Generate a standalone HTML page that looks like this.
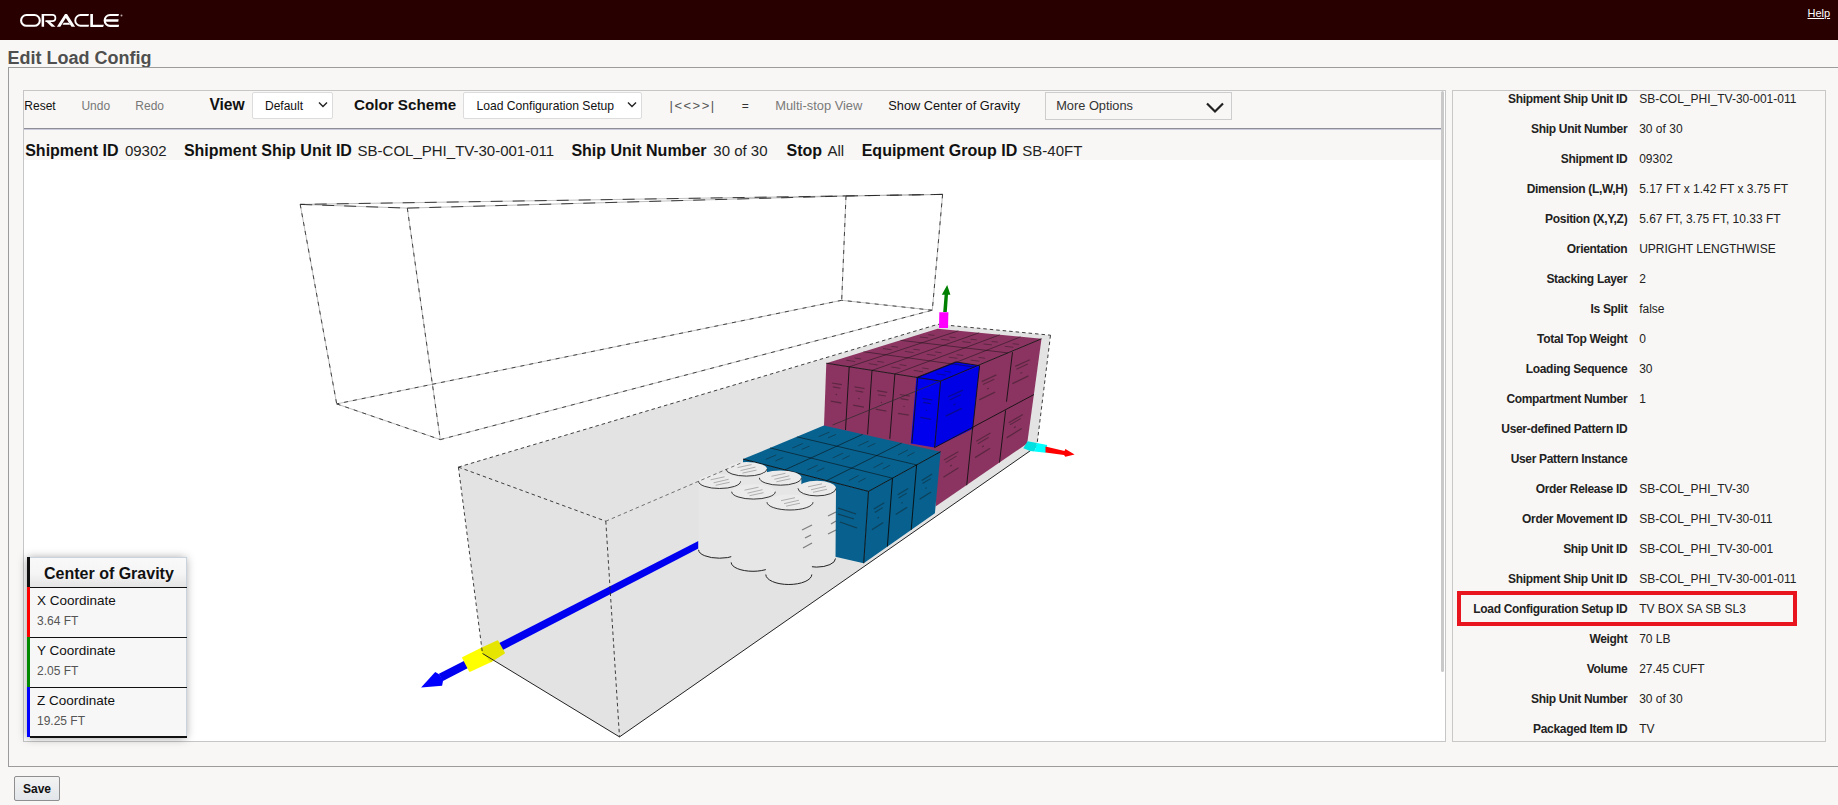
<!DOCTYPE html>
<html><head><meta charset="utf-8"><title>Edit Load Config</title>
<style>
html,body{margin:0;padding:0;}
body{width:1838px;height:805px;overflow:hidden;position:relative;background:#f8f7f5;font-family:"Liberation Sans",sans-serif;}
.t{position:absolute;white-space:pre;}
</style></head><body>
<div style="position:absolute;left:0;top:0;width:1838px;height:40px;background:#280000"></div>
<svg style="position:absolute;left:0;top:0" width="140" height="40" viewBox="0 0 140 40">
<rect x="21.1" y="15.05" width="18.7" height="10.75" rx="5.37" fill="none" stroke="#fff" stroke-width="2.1"/>
<g fill="#fff">
<path d="M41.6,14.1 H52.35 A3.95,3.95 0 0 1 52.35,22 H45.4 V20.3 H52.35 A2.25,2.25 0 0 0 52.35,15.8 H44.1 V26.7 H41.6 Z"/>
<path d="M45.6,21 H49.3 L55.5,26.7 H51.6 Z"/>
<path d="M56.9,26.7 L65,14.1 H67 L75.1,26.7 H71.5 L65.8,18 L60.3,26.7 Z"/>
<path d="M63.7,22.8 H68.8 L70.1,24.8 H62.5 Z"/>
<path d="M89,14.1 H80.6 A6.3,6.3 0 0 0 80.6,26.7 H88.6 L89,24.8 H80.6 A4.4,4.4 0 0 1 80.6,16 H88.4 Z"/>
<path d="M90.3,14 H92.95 V24.7 H103.9 L103.1,26.9 H90.3 Z"/>
<path d="M119,14 H110.05 A6.45,6.45 0 0 0 110.05,26.9 H118.6 L119.1,24.7 H110.05 A4.3,4.3 0 0 1 105.9,21.7 H118.3 L118.6,19.2 H105.9 A4.3,4.3 0 0 1 110.05,16.1 H118.4 Z"/>
</g><circle cx="121.5" cy="15.6" r="1" fill="#b9a9a9"/></svg>
<div class="t" style="left:1807.5px;top:8.3px;font-size:11px;line-height:11px;color:#fff;text-decoration:underline;">Help</div>
<div class="t" style="left:7.5px;top:48.6px;font-size:18px;line-height:18px;font-weight:700;color:#4f4f4f;">Edit Load Config</div>
<div style="position:absolute;left:8px;top:67px;width:1840px;height:698px;border:1px solid #9c9c9c"></div>
<div style="position:absolute;left:23px;top:90px;width:1421px;height:650px;border:1px solid #c6c6c6;background:#fff"></div>
<div style="position:absolute;left:24px;top:91px;width:1417px;height:37px;background:#f8f7f5"></div>
<div style="position:absolute;left:24px;top:128px;width:1420px;height:1px;background:#8e8e96"></div>
<div style="position:absolute;left:24px;top:129px;width:1420px;height:1px;background:#c9cbdc"></div>
<div style="position:absolute;left:24px;top:130px;width:1417px;height:30px;background:#f8f7f5"></div>
<div style="position:absolute;left:1441px;top:91px;width:3px;height:581px;background:#c9c9c9;border-radius:1.5px"></div>
<div class="t" style="left:24.3px;top:99.6px;font-size:12px;line-height:12px;color:#111;">Reset</div>
<div class="t" style="left:81.4px;top:99.6px;font-size:12px;line-height:12px;color:#777;">Undo</div>
<div class="t" style="left:135.3px;top:99.6px;font-size:12px;line-height:12px;color:#777;">Redo</div>
<div class="t" style="left:209.4px;top:96.9px;font-size:15.6px;line-height:15.6px;font-weight:700;color:#111;">View</div>
<div style="position:absolute;left:252px;top:92px;width:79px;height:25px;border:1px solid #dcdcdc;border-radius:2px;background:#fff"></div>
<div class="t" style="left:265.0px;top:99.6px;font-size:12px;line-height:12px;color:#111;">Default</div>
<svg style="position:absolute;left:318px;top:101px" width="10" height="8"><path d="M1 1.5 L5 5.5 L9 1.5" fill="none" stroke="#222" stroke-width="1.4"/></svg>
<div class="t" style="left:354.0px;top:97.2px;font-size:15.2px;line-height:15.2px;font-weight:700;color:#111;">Color Scheme</div>
<div style="position:absolute;left:463px;top:92px;width:177px;height:25px;border:1px solid #dcdcdc;border-radius:2px;background:#fff"></div>
<div class="t" style="left:476.4px;top:99.5px;font-size:12.15px;line-height:12.15px;color:#111;">Load Configuration Setup</div>
<svg style="position:absolute;left:627px;top:101px" width="10" height="8"><path d="M1 1.5 L5 5.5 L9 1.5" fill="none" stroke="#222" stroke-width="1.4"/></svg>
<div class="t" style="left:669.5px;top:98.8px;font-size:13px;line-height:13px;color:#555;letter-spacing:1.5px;">|&lt;&lt;&gt;&gt;|</div>
<div class="t" style="left:741.7px;top:99.6px;font-size:12px;line-height:12px;color:#333;">=</div>
<div class="t" style="left:775.2px;top:99.8px;font-size:12.9px;line-height:12.9px;color:#7a7a7a;">Multi-stop View</div>
<div class="t" style="left:888.3px;top:99.9px;font-size:12.75px;line-height:12.75px;color:#111;">Show Center of Gravity</div>
<div style="position:absolute;left:1045px;top:92px;width:185px;height:26px;border:1px solid #cdcdcd;background:#f8f7f5"></div>
<div class="t" style="left:1056.2px;top:99.7px;font-size:12.8px;line-height:12.8px;color:#333;">More Options</div>
<svg style="position:absolute;left:1205px;top:101px" width="20" height="14"><path d="M2 2.5 L10 10.5 L18 2.5" fill="none" stroke="#222" stroke-width="2.2"/></svg>
<div class="t" style="left:25.2px;top:143.4px;font-size:16px;line-height:16px;font-weight:700;color:#111;">Shipment ID</div>
<div class="t" style="left:124.9px;top:143.0px;font-size:15px;line-height:15px;color:#222;">09302</div>
<div class="t" style="left:183.9px;top:143.4px;font-size:16px;line-height:16px;font-weight:700;color:#111;">Shipment Ship Unit ID</div>
<div class="t" style="left:357.6px;top:143.0px;font-size:15px;line-height:15px;color:#222;">SB-COL_PHI_TV-30-001-011</div>
<div class="t" style="left:571.4px;top:143.4px;font-size:16px;line-height:16px;font-weight:700;color:#111;">Ship Unit Number</div>
<div class="t" style="left:713.3px;top:143.0px;font-size:15px;line-height:15px;color:#222;">30 of 30</div>
<div class="t" style="left:786.6px;top:143.4px;font-size:16px;line-height:16px;font-weight:700;color:#111;">Stop</div>
<div class="t" style="left:827.4px;top:143.0px;font-size:15px;line-height:15px;color:#222;">All</div>
<div class="t" style="left:861.7px;top:143.4px;font-size:16px;line-height:16px;font-weight:700;color:#111;">Equipment Group ID</div>
<div class="t" style="left:1022.3px;top:143.0px;font-size:15px;line-height:15px;color:#222;">SB-40FT</div>
<svg style="position:absolute;left:0;top:0" width="1838" height="805" viewBox="0 0 1838 805">
<defs><clipPath id="cv"><rect x="24" y="160" width="1417" height="580"/></clipPath></defs><g clip-path="url(#cv)">
<g stroke="#b8b8b8" stroke-width="0.9" fill="none">
<line x1="300.2" y1="204.4" x2="407.3" y2="208.1" />
<line x1="407.3" y1="208.1" x2="846.0" y2="196.0" />
<line x1="846.0" y1="196.0" x2="942.6" y2="194.4" />
<line x1="942.6" y1="194.4" x2="300.2" y2="204.4" />
<line x1="336.7" y1="403.9" x2="440.3" y2="439.6" />
<line x1="440.3" y1="439.6" x2="932.3" y2="310.2" />
<line x1="932.3" y1="310.2" x2="841.7" y2="300.3" />
<line x1="841.7" y1="300.3" x2="336.7" y2="403.9" />
<line x1="300.2" y1="204.4" x2="336.7" y2="403.9" />
<line x1="407.3" y1="208.1" x2="440.3" y2="439.6" />
<line x1="846.0" y1="196.0" x2="841.7" y2="300.3" />
<line x1="942.6" y1="194.4" x2="932.3" y2="310.2" />
</g><g stroke="#2a2a2a" stroke-width="0.9" fill="none" stroke-dasharray="12 10">
<line x1="300.2" y1="204.4" x2="407.3" y2="208.1" />
<line x1="407.3" y1="208.1" x2="846.0" y2="196.0" />
<line x1="846.0" y1="196.0" x2="942.6" y2="194.4" />
<line x1="942.6" y1="194.4" x2="300.2" y2="204.4" />
</g><g stroke="#333" stroke-width="0.9" fill="none" stroke-dasharray="4 5">
<line x1="336.7" y1="403.9" x2="440.3" y2="439.6" />
<line x1="440.3" y1="439.6" x2="932.3" y2="310.2" />
<line x1="932.3" y1="310.2" x2="841.7" y2="300.3" />
<line x1="841.7" y1="300.3" x2="336.7" y2="403.9" />
<line x1="300.2" y1="204.4" x2="336.7" y2="403.9" />
<line x1="407.3" y1="208.1" x2="440.3" y2="439.6" />
<line x1="846.0" y1="196.0" x2="841.7" y2="300.3" />
<line x1="942.6" y1="194.4" x2="932.3" y2="310.2" />
</g>
<polygon points="458.4,467.1 938.0,324.3 1050.5,335.2 1036.8,446.2 619.5,736.9 482.5,653.5" fill="#e3e3e3"/>
<polygon points="438.9,673.8 698.4,541.0 698.4,548.6 442.5,681.3" fill="#0000f0"/>
<polygon points="421.1,687.5 435.2,672.0 439.5,674.5 443.0,681.0 442.1,685.7" fill="#0000ff"/>
<polygon points="463.1,657.9 481.2,649.0 490.9,661.1 469.9,670.8" fill="#ffff00" stroke="#ffff00" stroke-width="2" stroke-linejoin="round"/>
<polygon points="481.2,649.0 497.4,641.3 503.9,653.0 490.9,661.1" fill="#e5e500" stroke="#e5e500" stroke-width="2" stroke-linejoin="round"/>
<polygon points="826.3,363.2 937.6,328.8 1041.5,338.8 940.6,381.1" fill="#8c3461"/>
<polygon points="826.3,363.2 940.6,381.1 941.5,455.0 823.8,431.0" fill="#8c3461"/>
<polygon points="940.6,381.1 1041.5,338.8 1027.2,443.5 935.5,506.5" fill="#8c3461"/>
<polygon points="916.4,377.6 940.6,381.1 934.6,447.6 910.8,443.4" fill="#0000ee"/>
<polygon points="916.4,377.6 955.8,361.9 979.6,365.7 940.6,381.1" fill="#0000ee"/>
<polygon points="940.6,381.1 979.6,365.7 972.7,428.7 934.6,447.6" fill="#0000e6"/>
<g stroke="#111" stroke-width="0.9" fill="none">
<line x1="849.2" y1="366.8" x2="958.4" y2="330.8" stroke-opacity="0.55"/>
<line x1="849.2" y1="366.8" x2="845.5" y2="430.0" />
<line x1="872.0" y1="370.4" x2="979.2" y2="332.8" stroke-opacity="0.55"/>
<line x1="872.0" y1="370.4" x2="867.6" y2="434.4" />
<line x1="894.9" y1="373.9" x2="999.9" y2="334.8" stroke-opacity="0.55"/>
<line x1="894.9" y1="373.9" x2="889.8" y2="438.8" />
<line x1="917.7" y1="377.5" x2="1020.7" y2="336.8" stroke-opacity="0.55"/>
<line x1="917.7" y1="377.5" x2="911.9" y2="443.2" />
<line x1="974.2" y1="367.0" x2="863.4" y2="351.7" stroke-opacity="0.55"/>
<line x1="1007.9" y1="352.9" x2="900.5" y2="340.3" stroke-opacity="0.55"/>
<line x1="826.3" y1="363.2" x2="940.6" y2="381.1" />
<line x1="940.6" y1="381.1" x2="1041.5" y2="338.8" />
<line x1="940.6" y1="381.1" x2="934.6" y2="447.6" />
<line x1="979.6" y1="365.7" x2="972.7" y2="428.7" />
<line x1="1012.5" y1="352.2" x2="1006.5" y2="401.7" />
<line x1="934.6" y1="447.6" x2="1034.0" y2="394.5" />
<line x1="972.6" y1="427.8" x2="966.7" y2="485.3" />
<line x1="1005.6" y1="410.4" x2="999.5" y2="462.5" />
<line x1="916.4" y1="377.6" x2="955.8" y2="361.9" />
<line x1="955.8" y1="361.9" x2="979.6" y2="365.7" />
</g>
<polygon points="743.1,459.1 823.8,425.6 940.6,451.7 868.5,491.4" fill="#08628f"/>
<polygon points="868.5,491.4 940.6,451.7 934.9,513.2 863.7,563.2" fill="#07608d"/>
<polygon points="743.1,459.1 868.5,491.4 863.7,563.2 740.0,535.0" fill="#07608d"/>
<g stroke="#0a0a0a" stroke-width="0.9" fill="none">
<line x1="868.5" y1="491.4" x2="940.6" y2="451.7" />
<line x1="868.5" y1="491.4" x2="863.7" y2="563.2" />
<line x1="743.1" y1="459.1" x2="868.5" y2="491.4" />
<line x1="892.5" y1="478.2" x2="887.4" y2="546.5" />
<line x1="770.0" y1="447.9" x2="892.5" y2="478.2" stroke-opacity="0.6"/>
<line x1="784.9" y1="469.9" x2="862.7" y2="434.3" stroke-opacity="0.6"/>
<line x1="916.6" y1="464.9" x2="911.2" y2="529.9" />
<line x1="796.9" y1="436.8" x2="916.6" y2="464.9" stroke-opacity="0.6"/>
<line x1="826.7" y1="480.6" x2="901.7" y2="443.0" stroke-opacity="0.6"/>
</g>
<g stroke="#141414" stroke-opacity="0.4" fill="none">
<line x1="831.9" y1="383.0" x2="841.9" y2="384.7" stroke-width="1.20"/>
<line x1="832.9" y1="386.9" x2="840.5" y2="388.3" stroke-width="1.10"/>
<line x1="835.7" y1="394.4" x2="837.1" y2="394.6" stroke-width="1.10"/>
<line x1="830.7" y1="401.1" x2="841.4" y2="403.0" stroke-width="1.30"/>
<line x1="854.5" y1="386.8" x2="864.5" y2="388.5" stroke-width="1.20"/>
<line x1="855.5" y1="390.8" x2="863.2" y2="392.1" stroke-width="1.10"/>
<line x1="858.2" y1="398.4" x2="859.6" y2="398.6" stroke-width="1.10"/>
<line x1="853.1" y1="405.1" x2="863.9" y2="407.1" stroke-width="1.30"/>
<line x1="877.2" y1="390.6" x2="887.2" y2="392.3" stroke-width="1.20"/>
<line x1="878.1" y1="394.7" x2="885.8" y2="396.0" stroke-width="1.10"/>
<line x1="880.8" y1="402.3" x2="882.1" y2="402.6" stroke-width="1.10"/>
<line x1="875.6" y1="409.2" x2="886.3" y2="411.2" stroke-width="1.30"/>
<line x1="899.8" y1="394.5" x2="909.8" y2="396.2" stroke-width="1.20"/>
<line x1="900.7" y1="398.6" x2="908.4" y2="399.9" stroke-width="1.10"/>
<line x1="903.3" y1="406.3" x2="904.7" y2="406.5" stroke-width="1.10"/>
<line x1="898.0" y1="413.3" x2="908.8" y2="415.2" stroke-width="1.30"/>
<line x1="922.5" y1="398.3" x2="932.5" y2="400.0" stroke-width="1.20"/>
<line x1="923.3" y1="402.4" x2="931.0" y2="403.8" stroke-width="1.10"/>
<line x1="925.8" y1="410.3" x2="927.2" y2="410.5" stroke-width="1.10"/>
<line x1="920.4" y1="417.3" x2="931.2" y2="419.3" stroke-width="1.30"/>
<line x1="948.2" y1="396.8" x2="962.9" y2="390.1" stroke-width="1.20"/>
<line x1="949.5" y1="400.0" x2="960.9" y2="394.7" stroke-width="1.10"/>
<line x1="953.5" y1="404.9" x2="955.5" y2="404.0" stroke-width="1.10"/>
<line x1="945.7" y1="416.1" x2="961.7" y2="408.3" stroke-width="1.30"/>
<line x1="943.9" y1="460.0" x2="958.2" y2="451.8" stroke-width="1.20"/>
<line x1="945.6" y1="462.6" x2="956.5" y2="456.1" stroke-width="1.10"/>
<line x1="950.0" y1="466.2" x2="951.9" y2="465.1" stroke-width="1.10"/>
<line x1="943.4" y1="477.2" x2="958.5" y2="467.8" stroke-width="1.30"/>
<line x1="981.7" y1="381.6" x2="996.4" y2="374.9" stroke-width="1.20"/>
<line x1="982.9" y1="384.6" x2="994.3" y2="379.3" stroke-width="1.10"/>
<line x1="986.9" y1="389.1" x2="988.9" y2="388.2" stroke-width="1.10"/>
<line x1="979.1" y1="399.9" x2="995.1" y2="392.1" stroke-width="1.30"/>
<line x1="976.3" y1="441.3" x2="990.5" y2="433.1" stroke-width="1.20"/>
<line x1="977.8" y1="443.7" x2="988.7" y2="437.3" stroke-width="1.10"/>
<line x1="982.0" y1="447.0" x2="983.9" y2="445.8" stroke-width="1.10"/>
<line x1="975.0" y1="457.6" x2="990.1" y2="448.2" stroke-width="1.30"/>
<line x1="1015.1" y1="366.4" x2="1029.9" y2="359.8" stroke-width="1.20"/>
<line x1="1016.4" y1="369.2" x2="1027.8" y2="363.9" stroke-width="1.10"/>
<line x1="1020.3" y1="373.3" x2="1022.3" y2="372.4" stroke-width="1.10"/>
<line x1="1012.4" y1="383.7" x2="1028.4" y2="375.9" stroke-width="1.30"/>
<line x1="1008.7" y1="422.7" x2="1022.9" y2="414.4" stroke-width="1.20"/>
<line x1="1010.0" y1="424.8" x2="1020.9" y2="418.4" stroke-width="1.10"/>
<line x1="1013.9" y1="427.7" x2="1015.8" y2="426.6" stroke-width="1.10"/>
<line x1="1006.6" y1="437.9" x2="1021.8" y2="428.5" stroke-width="1.30"/>
<line x1="846.1" y1="360.2" x2="855.1" y2="361.6" stroke-width="1"/>
<line x1="854.6" y1="358.0" x2="861.3" y2="359.0" stroke-width="1"/>
<line x1="883.0" y1="348.6" x2="891.7" y2="349.7" stroke-width="1"/>
<line x1="891.4" y1="346.4" x2="898.0" y2="347.2" stroke-width="1"/>
<line x1="919.9" y1="337.0" x2="928.3" y2="337.9" stroke-width="1"/>
<line x1="928.3" y1="334.7" x2="934.6" y2="335.4" stroke-width="1"/>
<line x1="868.7" y1="363.6" x2="877.7" y2="365.0" stroke-width="1"/>
<line x1="877.1" y1="361.3" x2="883.8" y2="362.3" stroke-width="1"/>
<line x1="904.9" y1="351.4" x2="913.7" y2="352.6" stroke-width="1"/>
<line x1="913.2" y1="349.2" x2="919.8" y2="350.0" stroke-width="1"/>
<line x1="941.1" y1="339.3" x2="949.6" y2="340.2" stroke-width="1"/>
<line x1="949.4" y1="337.0" x2="955.7" y2="337.7" stroke-width="1"/>
<line x1="891.3" y1="367.0" x2="900.4" y2="368.4" stroke-width="1"/>
<line x1="899.5" y1="364.6" x2="906.3" y2="365.6" stroke-width="1"/>
<line x1="926.8" y1="354.3" x2="935.6" y2="355.5" stroke-width="1"/>
<line x1="935.0" y1="351.9" x2="941.5" y2="352.8" stroke-width="1"/>
<line x1="962.3" y1="341.6" x2="970.8" y2="342.6" stroke-width="1"/>
<line x1="970.5" y1="339.2" x2="976.8" y2="339.9" stroke-width="1"/>
<line x1="913.9" y1="370.4" x2="923.0" y2="371.8" stroke-width="1"/>
<line x1="922.0" y1="367.9" x2="928.8" y2="368.9" stroke-width="1"/>
<line x1="948.7" y1="357.2" x2="957.5" y2="358.3" stroke-width="1"/>
<line x1="956.8" y1="354.7" x2="963.3" y2="355.5" stroke-width="1"/>
<line x1="983.5" y1="344.0" x2="992.0" y2="344.9" stroke-width="1"/>
<line x1="991.6" y1="341.5" x2="997.9" y2="342.1" stroke-width="1"/>
<line x1="936.5" y1="373.8" x2="945.6" y2="375.1" stroke-width="1"/>
<line x1="944.5" y1="371.2" x2="951.2" y2="372.2" stroke-width="1"/>
<line x1="970.7" y1="360.1" x2="979.4" y2="361.2" stroke-width="1"/>
<line x1="978.6" y1="357.4" x2="985.1" y2="358.3" stroke-width="1"/>
<line x1="1004.8" y1="346.3" x2="1013.3" y2="347.3" stroke-width="1"/>
<line x1="1012.7" y1="343.7" x2="1019.0" y2="344.4" stroke-width="1"/>
<line x1="873.8" y1="508.9" x2="884.3" y2="502.7" stroke-width="1.20"/>
<line x1="874.7" y1="512.5" x2="882.8" y2="507.6" stroke-width="1.10"/>
<line x1="877.5" y1="518.2" x2="878.9" y2="517.3" stroke-width="1.10"/>
<line x1="871.9" y1="529.8" x2="883.3" y2="522.5" stroke-width="1.30"/>
<line x1="897.7" y1="494.7" x2="908.2" y2="488.4" stroke-width="1.20"/>
<line x1="898.6" y1="498.0" x2="906.7" y2="493.1" stroke-width="1.10"/>
<line x1="901.4" y1="503.3" x2="902.8" y2="502.4" stroke-width="1.10"/>
<line x1="895.7" y1="514.5" x2="907.2" y2="507.2" stroke-width="1.30"/>
<line x1="921.7" y1="480.4" x2="932.2" y2="474.1" stroke-width="1.20"/>
<line x1="922.5" y1="483.5" x2="930.7" y2="478.6" stroke-width="1.10"/>
<line x1="925.3" y1="488.5" x2="926.7" y2="487.6" stroke-width="1.10"/>
<line x1="919.6" y1="499.3" x2="931.0" y2="492.0" stroke-width="1.30"/>
<line x1="765.7" y1="459.4" x2="776.3" y2="454.9" stroke-width="1"/>
<line x1="775.3" y1="461.0" x2="783.2" y2="457.5" stroke-width="1"/>
<line x1="792.3" y1="448.0" x2="802.9" y2="443.5" stroke-width="1"/>
<line x1="801.7" y1="449.4" x2="809.6" y2="446.0" stroke-width="1"/>
<line x1="818.8" y1="436.6" x2="829.5" y2="432.1" stroke-width="1"/>
<line x1="828.1" y1="437.9" x2="836.0" y2="434.4" stroke-width="1"/>
<line x1="807.2" y1="470.0" x2="817.5" y2="465.2" stroke-width="1"/>
<line x1="816.8" y1="471.5" x2="824.4" y2="467.8" stroke-width="1"/>
<line x1="832.8" y1="457.9" x2="843.1" y2="453.1" stroke-width="1"/>
<line x1="842.2" y1="459.3" x2="849.8" y2="455.6" stroke-width="1"/>
<line x1="858.4" y1="445.8" x2="868.7" y2="441.0" stroke-width="1"/>
<line x1="867.6" y1="447.0" x2="875.3" y2="443.4" stroke-width="1"/>
<line x1="848.7" y1="480.6" x2="858.6" y2="475.5" stroke-width="1"/>
<line x1="858.3" y1="482.0" x2="865.6" y2="478.2" stroke-width="1"/>
<line x1="873.4" y1="467.8" x2="883.2" y2="462.7" stroke-width="1"/>
<line x1="882.7" y1="469.1" x2="890.1" y2="465.2" stroke-width="1"/>
<line x1="898.0" y1="455.0" x2="907.9" y2="449.9" stroke-width="1"/>
<line x1="907.2" y1="456.2" x2="914.5" y2="452.3" stroke-width="1"/>
</g>
<path d="M726.0,469.1 L725.5,539.0 A20.5,8.4 0 0 0 766.5,539.0 L767.0,469.1 Z" fill="#e6e6e6"/>
<ellipse cx="746.5" cy="469.1" rx="20.5" ry="7.0" fill="#ebebeb"/>
<path d="M726.0,469.1 A20.5,7.0 0 0 0 767.0,469.1" fill="none" stroke="#222" stroke-width="0.9"/>
<path d="M725.5,539.0 A20.5,8.4 0 0 0 766.5,539.0" fill="none" stroke="#222" stroke-width="1"/>
<g stroke="#222" stroke-opacity="0.35" stroke-width="0.9"><line x1="737.5" y1="467.6" x2="751.5" y2="464.6"/><line x1="740.5" y1="470.6" x2="755.5" y2="467.1"/><line x1="742.5" y1="473.1" x2="756.5" y2="470.1"/></g>
<path d="M698.6,481.3 L698.6,549.8 A21.0,8.4 0 0 0 740.6,549.8 L740.6,481.3 Z" fill="#e6e6e6"/>
<ellipse cx="719.6" cy="481.3" rx="21.0" ry="7.2" fill="#ebebeb"/>
<path d="M698.6,481.3 A21.0,7.2 0 0 0 740.6,481.3" fill="none" stroke="#222" stroke-width="0.9"/>
<path d="M698.6,549.8 A21.0,8.4 0 0 0 740.6,549.8" fill="none" stroke="#222" stroke-width="1"/>
<g stroke="#222" stroke-opacity="0.35" stroke-width="0.9"><line x1="710.6" y1="479.8" x2="724.6" y2="476.8"/><line x1="713.6" y1="482.8" x2="728.6" y2="479.3"/><line x1="715.6" y1="485.3" x2="729.6" y2="482.3"/></g>
<path d="M759.4,477.8 L759.0,547.5 A21.0,8.6 0 0 0 801.0,547.5 L801.4,477.8 Z" fill="#e6e6e6"/>
<ellipse cx="780.4" cy="477.8" rx="21.0" ry="7.4" fill="#ebebeb"/>
<path d="M759.4,477.8 A21.0,7.4 0 0 0 801.4,477.8" fill="none" stroke="#222" stroke-width="0.9"/>
<path d="M759.0,547.5 A21.0,8.6 0 0 0 801.0,547.5" fill="none" stroke="#222" stroke-width="1"/>
<g stroke="#222" stroke-opacity="0.35" stroke-width="0.9"><line x1="771.4" y1="476.3" x2="785.4" y2="473.3"/><line x1="774.4" y1="479.3" x2="789.4" y2="475.8"/><line x1="776.4" y1="481.8" x2="790.4" y2="478.8"/></g>
<path d="M798.0,488.3 L797.5,558.5 A19.0,8.6 0 0 0 835.5,558.5 L836.0,488.3 Z" fill="#e6e6e6"/>
<ellipse cx="817.0" cy="488.3" rx="19.0" ry="7.6" fill="#ebebeb"/>
<path d="M798.0,488.3 A19.0,7.6 0 0 0 836.0,488.3" fill="none" stroke="#222" stroke-width="0.9"/>
<path d="M797.5,558.5 A19.0,8.6 0 0 0 835.5,558.5" fill="none" stroke="#222" stroke-width="1"/>
<g stroke="#222" stroke-opacity="0.35" stroke-width="0.9"><line x1="808.0" y1="486.8" x2="822.0" y2="483.8"/><line x1="811.0" y1="489.8" x2="826.0" y2="486.3"/><line x1="813.0" y1="492.3" x2="827.0" y2="489.3"/></g>
<path d="M731.7,491.7 L731.2,562.4 A21.8,8.9 0 0 0 774.8,562.4 L775.3,491.7 Z" fill="#e6e6e6"/>
<ellipse cx="753.5" cy="491.7" rx="21.8" ry="7.4" fill="#ebebeb"/>
<path d="M731.7,491.7 A21.8,7.4 0 0 0 775.3,491.7" fill="none" stroke="#222" stroke-width="0.9"/>
<path d="M731.2,562.4 A21.8,8.9 0 0 0 774.8,562.4" fill="none" stroke="#222" stroke-width="1"/>
<g stroke="#222" stroke-opacity="0.35" stroke-width="0.9"><line x1="744.5" y1="490.2" x2="758.5" y2="487.2"/><line x1="747.5" y1="493.2" x2="762.5" y2="489.7"/><line x1="749.5" y1="495.7" x2="763.5" y2="492.7"/></g>
<path d="M767.0,502.2 L765.8,574.5 A23.0,10.0 0 0 0 811.8,574.5 L813.0,502.2 Z" fill="#e6e6e6"/>
<ellipse cx="790.0" cy="502.2" rx="23.0" ry="7.8" fill="#ebebeb"/>
<path d="M767.0,502.2 A23.0,7.8 0 0 0 813.0,502.2" fill="none" stroke="#222" stroke-width="0.9"/>
<path d="M765.8,574.5 A23.0,10.0 0 0 0 811.8,574.5" fill="none" stroke="#222" stroke-width="1"/>
<g stroke="#222" stroke-opacity="0.35" stroke-width="0.9"><line x1="781.0" y1="500.7" x2="795.0" y2="497.7"/><line x1="784.0" y1="503.7" x2="799.0" y2="500.2"/><line x1="786.0" y1="506.2" x2="800.0" y2="503.2"/></g>
<g stroke="#1a1a1a" stroke-opacity="0.5" stroke-width="1.3" fill="none">
<line x1="802" y1="530" x2="812" y2="525"/>
<line x1="805" y1="538" x2="811" y2="535"/>
<line x1="803" y1="548" x2="812" y2="543"/>
<line x1="828" y1="516" x2="836" y2="512"/>
<line x1="831" y1="524" x2="836" y2="521"/>
<line x1="828" y1="534" x2="836" y2="530"/>
<line x1="838" y1="508" x2="856" y2="514"/>
<line x1="838" y1="514" x2="854" y2="519"/>
<line x1="840" y1="522" x2="857" y2="528"/>
</g>
<g stroke="#222" stroke-width="1" fill="none">
<line x1="482.5" y1="653.5" x2="619.5" y2="736.9" />
<line x1="619.5" y1="736.9" x2="1036.8" y2="446.2" />
</g><g stroke="#2a2a2a" stroke-width="0.9" fill="none" stroke-dasharray="3.5 3">
<line x1="458.4" y1="467.1" x2="605.8" y2="521.2" />
<line x1="458.4" y1="467.1" x2="482.5" y2="653.5" />
<line x1="605.8" y1="521.2" x2="619.5" y2="736.9" />
<line x1="458.4" y1="467.1" x2="938.0" y2="324.3" />
<line x1="938.0" y1="324.3" x2="1050.5" y2="335.2" />
<line x1="1050.5" y1="335.2" x2="1036.8" y2="446.2" />
<line x1="605.8" y1="521.2" x2="743.1" y2="462.1" stroke-opacity="0.7"/>
<line x1="832.6" y1="425.0" x2="940.6" y2="381.1" stroke-opacity="0.8" stroke-dasharray="none"/>
</g>
<polygon points="939.3,312.2 948.4,312.2 948.0,328.1 939.0,328.1" fill="#ff00ff"/>
<polygon points="943.2,312.0 944.6,294.8 941.8,294.8 947.2,284.9 950.4,294.8 948.0,294.8 946.8,312.0" fill="#008000"/>
<polygon points="1023.3,448.3 1027.6,441.3 1037.0,443.0 1034.5,451.5 1030.2,450.9" fill="#00e0e0"/>
<polygon points="1037.0,443.0 1047.2,445.0 1045.9,452.8 1034.5,451.5" fill="#00ffff"/>
<polygon points="1045.5,446.5 1064.5,451.0 1065.4,449.1 1074.6,454.6 1065.4,456.7 1064.0,455.0 1045.5,452.5" fill="#ff0000"/>
</g></svg>
<div style="position:absolute;left:1452px;top:90px;width:372px;height:650px;border:1px solid #c8c8c8;background:#f8f7f5"></div>
<div class="t" style="right:210.7px;top:92.5px;font-size:12px;line-height:12px;font-weight:700;color:#222;letter-spacing:-0.32px;">Shipment Ship Unit ID</div>
<div class="t" style="left:1639.2px;top:92.5px;font-size:12px;line-height:12px;color:#222;">SB-COL_PHI_TV-30-001-011</div>
<div class="t" style="right:210.7px;top:122.5px;font-size:12px;line-height:12px;font-weight:700;color:#222;letter-spacing:-0.32px;">Ship Unit Number</div>
<div class="t" style="left:1639.2px;top:122.5px;font-size:12px;line-height:12px;color:#222;">30 of 30</div>
<div class="t" style="right:210.7px;top:152.5px;font-size:12px;line-height:12px;font-weight:700;color:#222;letter-spacing:-0.32px;">Shipment ID</div>
<div class="t" style="left:1639.2px;top:152.5px;font-size:12px;line-height:12px;color:#222;">09302</div>
<div class="t" style="right:210.7px;top:182.5px;font-size:12px;line-height:12px;font-weight:700;color:#222;letter-spacing:-0.32px;">Dimension (L,W,H)</div>
<div class="t" style="left:1639.2px;top:182.5px;font-size:12px;line-height:12px;color:#222;">5.17 FT x 1.42 FT x 3.75 FT</div>
<div class="t" style="right:210.7px;top:212.5px;font-size:12px;line-height:12px;font-weight:700;color:#222;letter-spacing:-0.32px;">Position (X,Y,Z)</div>
<div class="t" style="left:1639.2px;top:212.5px;font-size:12px;line-height:12px;color:#222;">5.67 FT, 3.75 FT, 10.33 FT</div>
<div class="t" style="right:210.7px;top:242.5px;font-size:12px;line-height:12px;font-weight:700;color:#222;letter-spacing:-0.32px;">Orientation</div>
<div class="t" style="left:1639.2px;top:242.5px;font-size:12px;line-height:12px;color:#222;">UPRIGHT LENGTHWISE</div>
<div class="t" style="right:210.7px;top:272.5px;font-size:12px;line-height:12px;font-weight:700;color:#222;letter-spacing:-0.32px;">Stacking Layer</div>
<div class="t" style="left:1639.2px;top:272.5px;font-size:12px;line-height:12px;color:#222;">2</div>
<div class="t" style="right:210.7px;top:302.5px;font-size:12px;line-height:12px;font-weight:700;color:#222;letter-spacing:-0.32px;">Is Split</div>
<div class="t" style="left:1639.2px;top:302.5px;font-size:12px;line-height:12px;color:#222;">false</div>
<div class="t" style="right:210.7px;top:332.5px;font-size:12px;line-height:12px;font-weight:700;color:#222;letter-spacing:-0.32px;">Total Top Weight</div>
<div class="t" style="left:1639.2px;top:332.5px;font-size:12px;line-height:12px;color:#222;">0</div>
<div class="t" style="right:210.7px;top:362.5px;font-size:12px;line-height:12px;font-weight:700;color:#222;letter-spacing:-0.32px;">Loading Sequence</div>
<div class="t" style="left:1639.2px;top:362.5px;font-size:12px;line-height:12px;color:#222;">30</div>
<div class="t" style="right:210.7px;top:392.5px;font-size:12px;line-height:12px;font-weight:700;color:#222;letter-spacing:-0.32px;">Compartment Number</div>
<div class="t" style="left:1639.2px;top:392.5px;font-size:12px;line-height:12px;color:#222;">1</div>
<div class="t" style="right:210.7px;top:422.5px;font-size:12px;line-height:12px;font-weight:700;color:#222;letter-spacing:-0.32px;">User-defined Pattern ID</div>
<div class="t" style="right:210.7px;top:452.5px;font-size:12px;line-height:12px;font-weight:700;color:#222;letter-spacing:-0.32px;">User Pattern Instance</div>
<div class="t" style="right:210.7px;top:482.5px;font-size:12px;line-height:12px;font-weight:700;color:#222;letter-spacing:-0.32px;">Order Release ID</div>
<div class="t" style="left:1639.2px;top:482.5px;font-size:12px;line-height:12px;color:#222;">SB-COL_PHI_TV-30</div>
<div class="t" style="right:210.7px;top:512.5px;font-size:12px;line-height:12px;font-weight:700;color:#222;letter-spacing:-0.32px;">Order Movement ID</div>
<div class="t" style="left:1639.2px;top:512.5px;font-size:12px;line-height:12px;color:#222;">SB-COL_PHI_TV-30-011</div>
<div class="t" style="right:210.7px;top:542.5px;font-size:12px;line-height:12px;font-weight:700;color:#222;letter-spacing:-0.32px;">Ship Unit ID</div>
<div class="t" style="left:1639.2px;top:542.5px;font-size:12px;line-height:12px;color:#222;">SB-COL_PHI_TV-30-001</div>
<div class="t" style="right:210.7px;top:572.5px;font-size:12px;line-height:12px;font-weight:700;color:#222;letter-spacing:-0.32px;">Shipment Ship Unit ID</div>
<div class="t" style="left:1639.2px;top:572.5px;font-size:12px;line-height:12px;color:#222;">SB-COL_PHI_TV-30-001-011</div>
<div class="t" style="right:210.7px;top:602.5px;font-size:12px;line-height:12px;font-weight:700;color:#222;letter-spacing:-0.32px;">Load Configuration Setup ID</div>
<div class="t" style="left:1639.2px;top:602.5px;font-size:12px;line-height:12px;color:#222;">TV BOX SA SB SL3</div>
<div class="t" style="right:210.7px;top:632.5px;font-size:12px;line-height:12px;font-weight:700;color:#222;letter-spacing:-0.32px;">Weight</div>
<div class="t" style="left:1639.2px;top:632.5px;font-size:12px;line-height:12px;color:#222;">70 LB</div>
<div class="t" style="right:210.7px;top:662.5px;font-size:12px;line-height:12px;font-weight:700;color:#222;letter-spacing:-0.32px;">Volume</div>
<div class="t" style="left:1639.2px;top:662.5px;font-size:12px;line-height:12px;color:#222;">27.45 CUFT</div>
<div class="t" style="right:210.7px;top:692.5px;font-size:12px;line-height:12px;font-weight:700;color:#222;letter-spacing:-0.32px;">Ship Unit Number</div>
<div class="t" style="left:1639.2px;top:692.5px;font-size:12px;line-height:12px;color:#222;">30 of 30</div>
<div class="t" style="right:210.7px;top:722.5px;font-size:12px;line-height:12px;font-weight:700;color:#222;letter-spacing:-0.32px;">Packaged Item ID</div>
<div class="t" style="left:1639.2px;top:722.5px;font-size:12px;line-height:12px;color:#222;">TV</div>
<div style="position:absolute;left:1457px;top:591px;width:332px;height:27px;border:4px solid #e8151f"></div>
<div style="position:absolute;left:27px;top:557px;width:159px;height:180px;background:#f7f7f7;box-shadow:0 1px 9px rgba(0,0,0,0.38);"></div>
<div style="position:absolute;left:30px;top:557px;width:156px;height:30px;background:linear-gradient(#f9f9f9 0%,#f5f5f5 55%,#e4e4e4 100%)"></div>
<div style="position:absolute;left:30px;top:557px;width:157px;height:1px;background:#c9d3de"></div>
<div style="position:absolute;left:186px;top:557px;width:1px;height:180px;background:#c9d3de"></div>
<div style="position:absolute;left:27px;top:557px;width:3px;height:30px;background:#111"></div>
<div style="position:absolute;left:27px;top:587px;width:3px;height:50px;background:#f00"></div>
<div style="position:absolute;left:27px;top:637px;width:3px;height:50px;background:#080"></div>
<div style="position:absolute;left:27px;top:687px;width:3px;height:50px;background:#00f"></div>
<div style="position:absolute;left:30px;top:586.8px;width:157px;height:1.6px;background:#111"></div>
<div style="position:absolute;left:30px;top:636.8px;width:157px;height:1.6px;background:#111"></div>
<div style="position:absolute;left:30px;top:686.8px;width:157px;height:1.6px;background:#111"></div>
<div style="position:absolute;left:30px;top:736.4px;width:157px;height:1.6px;background:#111"></div>
<div class="t" style="left:44.0px;top:566.1px;font-size:16px;line-height:16px;font-weight:700;color:#111;">Center of Gravity</div>
<div class="t" style="left:37.0px;top:594.2px;font-size:13.5px;line-height:13.5px;color:#111;">X Coordinate</div>
<div class="t" style="left:37.0px;top:614.5px;font-size:12px;line-height:12px;color:#555;">3.64 FT</div>
<div class="t" style="left:37.0px;top:644.2px;font-size:13.5px;line-height:13.5px;color:#111;">Y Coordinate</div>
<div class="t" style="left:37.0px;top:664.5px;font-size:12px;line-height:12px;color:#555;">2.05 FT</div>
<div class="t" style="left:37.0px;top:694.2px;font-size:13.5px;line-height:13.5px;color:#111;">Z Coordinate</div>
<div class="t" style="left:37.0px;top:714.5px;font-size:12px;line-height:12px;color:#555;">19.25 FT</div>
<div style="position:absolute;left:14px;top:776px;width:44px;height:23px;border:1px solid #8f8f8f;border-radius:2px;background:linear-gradient(#f3f3f3,#e2e6ea)"></div>
<div class="t" style="left:23.0px;top:783.4px;font-size:12px;line-height:12px;font-weight:700;color:#111;">Save</div>
</body></html>
